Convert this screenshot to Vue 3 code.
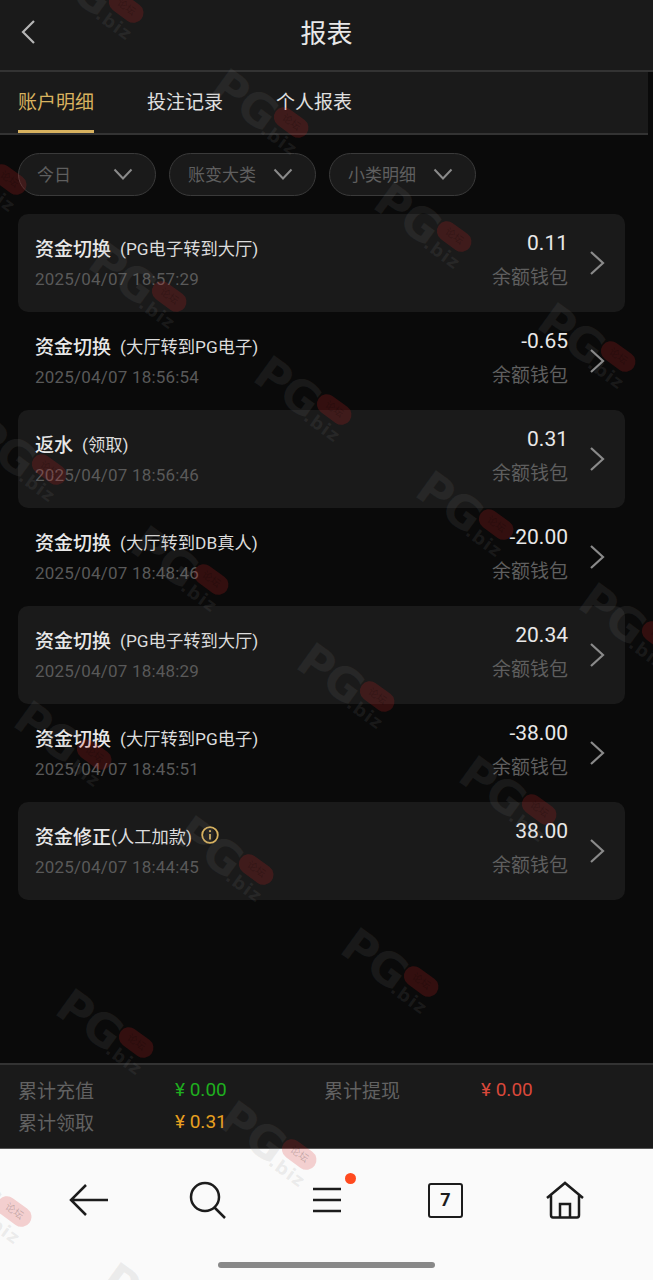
<script setup>
const tabs = ['账户明细', '投注记录', '个人报表']
const filters = ['今日', '账变大类', '小类明细']

const rows = [
  { title: '资金切换', note: '(PG电子转到大厅)', time: '2025/04/07 18:57:29', amount: '0.11' },
  { title: '资金切换', note: '(大厅转到PG电子)', time: '2025/04/07 18:56:54', amount: '-0.65' },
  { title: '返水', note: '(领取)', time: '2025/04/07 18:56:46', amount: '0.31' },
  { title: '资金切换', note: '(大厅转到DB真人)', time: '2025/04/07 18:48:46', amount: '-20.00' },
  { title: '资金切换', note: '(PG电子转到大厅)', time: '2025/04/07 18:48:29', amount: '20.34' },
  { title: '资金切换', note: '(大厅转到PG电子)', time: '2025/04/07 18:45:51', amount: '-38.00' },
  { title: '资金修正', note: '(人工加款)', time: '2025/04/07 18:44:45', amount: '38.00', info: true },
]

// centre of each watermark stamp
const marks = [
  [95, -4], [260, 111], [423, 225], [138, 285], [587, 345], [303, 398], [-22, 168],
  [18, 458], [465, 513], [180, 568], [628, 625], [346, 685], [63, 743], [508, 798],
  [225, 858], [390, 970], [105, 1031], [268, 1143], [-17, 1200], [150, 1305],
]
</script>

<template>
  <div class="page">
    <header class="top">
      <svg class="back" width="16" height="26" viewBox="0 0 16 26">
        <path d="M14 2 L3 13 L14 24" />
      </svg>
      <h1>报表</h1>
    </header>

    <nav class="tabs">
      <span v-for="(t, i) in tabs" :key="t" class="tab" :class="{ on: i === 0 }">{{ t }}</span>
    </nav>

    <main class="content">
      <div class="filters">
        <div v-for="f in filters" :key="f" class="pill">
          <span>{{ f }}</span>
          <svg width="20" height="12" viewBox="0 0 20 12"><path d="M1.5 1.5 L10 10.5 L18.5 1.5" /></svg>
        </div>
      </div>

      <ul class="list">
        <li v-for="(r, i) in rows" :key="i" class="row" :class="{ alt: i % 2 === 0 }">
          <div class="left">
            <div class="name">
              <b>{{ r.title }}</b><span class="note" :class="{ tight: r.info }">{{ r.note }}</span>
              <svg v-if="r.info" class="info" width="18" height="18" viewBox="0 0 18 18">
                <circle cx="9" cy="9" r="7.8" />
                <path d="M9 8 V13.5" />
                <circle class="dot" cx="9" cy="5.2" r="1.1" />
              </svg>
            </div>
            <div class="time">{{ r.time }}</div>
          </div>
          <div class="right">
            <div class="amount">{{ r.amount }}</div>
            <div class="wallet">余额钱包</div>
          </div>
          <svg class="more" width="16" height="26" viewBox="0 0 16 26"><path d="M2 2 L14 13 L2 24" /></svg>
        </li>
      </ul>
    </main>

    <section class="summary">
      <div class="cell"><span class="lab">累计充值</span><span class="val green">¥ 0.00</span></div>
      <div class="cell"><span class="lab">累计提现</span><span class="val red">¥ 0.00</span></div>
      <div class="cell"><span class="lab">累计领取</span><span class="val orange">¥ 0.31</span></div>
    </section>

    <footer class="browser">
      <div class="tools">
        <svg width="40" height="34" viewBox="0 0 40 34"><path d="M39 17 H3 M17 2 L2 17 L17 32" /></svg>
        <svg width="40" height="38" viewBox="0 0 40 38"><circle cx="17" cy="16" r="14" /><path d="M26 26 L37 37" /></svg>
        <div class="menu">
          <svg width="30" height="26" viewBox="0 0 30 26"><path d="M1 2 H29 M1 13 H29 M1 24 H29" /></svg>
          <i class="badge"></i>
        </div>
        <div class="count">7</div>
        <svg width="40" height="38" viewBox="0 0 40 38">
          <path d="M2 17 L20 2 L38 17 M6 14 V34 Q6 36.500 8 36.500 H32 Q34 36.500 34 34 V14 M15 36 V23 H25 V36" />
        </svg>
      </div>
      <div class="handle"></div>
    </footer>

    <div class="stamps">
      <div v-for="(m, i) in marks" :key="i" class="stamp" :style="{ left: m[0] + 'px', top: m[1] + 'px' }">
        <span class="pg">PG</span>
        <span class="blob">论坛</span>
        <span class="biz">.biz</span>
      </div>
    </div>
  </div>
</template>

<style scoped>
.page {
  position: relative;
  width: 653px;
  height: 1280px;
  overflow: hidden;
  display: flex;
  flex-direction: column;
  background: #0a0a0a;
  font-family: Roboto, "Noto Sans CJK SC", sans-serif;
  color: #e6e6e6;
}

.top {
  height: 72px;
  box-sizing: border-box;
  flex: none;
  position: relative;
  display: flex;
  align-items: center;
  justify-content: center;
  background: #1a1a1a;
  border-bottom: 2px solid #333;
}
.top h1 {
  margin: 0 0 7px;
  font-size: 26px;
  font-weight: 400;
  color: #e8e8e8;
}
.back {
  position: absolute;
  left: 20px;
  top: 19px;
}
.back path {
  fill: none;
  stroke: #b5b5b5;
  stroke-width: 2.2;
}

.tabs {
  height: 63px;
  box-sizing: border-box;
  flex: none;
  margin-right: 5px;
  padding-left: 18px;
  display: flex;
  gap: 53px;
  background: #1a1a1a;
  border-bottom: 2px solid #333;
}
.tab {
  font-size: 19px;
  line-height: 62px;
  color: #e0e0e0;
  height: 61px;
  box-sizing: border-box;
}
.tab.on {
  color: #d8b25f;
  border-bottom: 3px solid #d8b25f;
}

.content {
  flex: 1;
  padding: 18px 28px 0 18px;
}

.filters {
  display: flex;
  gap: 13px;
}
.pill {
  width: 147px;
  height: 43px;
  box-sizing: border-box;
  padding: 0 22px 2px 18px;
  display: flex;
  align-items: center;
  justify-content: space-between;
  background: #1a1a1a;
  border: 1px solid #3a3a3a;
  border-radius: 22px;
  font-size: 17px;
  color: #5f5f5f;
}
.pill:first-child {
  width: 138px;
}
.pill svg path {
  fill: none;
  stroke: #8a8a8a;
  stroke-width: 2;
}

.list {
  list-style: none;
  margin: 18px 0 0;
  padding: 0;
}
.row {
  height: 98px;
  box-sizing: border-box;
  padding: 0 20px 0 17px;
  display: flex;
  align-items: center;
  border-radius: 10px;
}
.row.alt {
  background: #1a1a1a;
}
.left {
  flex: 1;
  margin-top: -4px;
}
.name {
  display: flex;
  align-items: center;
  height: 28px;
  font-size: 19px;
  color: #e8e8e8;
}
.name b {
  font-weight: 500;
}
.note {
  margin-left: 9px;
  font-size: 17.300px;
  color: #dcdcdc;
}
.note.tight {
  margin-left: 0;
}
.info {
  margin-left: 9px;
}
.info circle,
.info path {
  fill: none;
  stroke: #d8b25f;
  stroke-width: 1.800;
}
.info .dot {
  fill: #d8b25f;
  stroke: none;
}
.time {
  margin-top: 8px;
  font-size: 17px;
  letter-spacing: 0.200px;
  color: #595959;
}
.right {
  text-align: right;
  margin-top: -5px;
}
.amount {
  font-size: 21px;
  line-height: 28px;
  color: #e8e8e8;
}
.wallet {
  margin-top: 7px;
  font-size: 19px;
  line-height: 28px;
  color: #5f5f5f;
}
.more {
  margin-left: 21px;
}
.more path {
  fill: none;
  stroke: #8a8a8a;
  stroke-width: 2.2;
}

.summary {
  height: 86px;
  flex: none;
  padding: 8px 0 0 18px;
  box-sizing: border-box;
  display: grid;
  grid-template-columns: 306px 1fr;
  grid-auto-rows: 32px;
  background: #1a1a1a;
  border-top: 2px solid #333;
  border-bottom: 1px solid #555;
  font-size: 19px;
}
.cell {
  display: flex;
  align-items: center;
}
.lab {
  width: 157px;
  color: #626262;
}
.val {
  font-size: 19px;
}
.green { color: #1fae1f; }
.red { color: #d9483a; }
.orange { color: #e8a020; }

.browser {
  height: 131px;
  flex: none;
  box-sizing: border-box;
  padding-top: 32px;
  background: #fafafa;
}
.tools {
  height: 38px;
  padding: 0 29px;
  display: grid;
  grid-template-columns: repeat(5, 119px);
  justify-items: center;
  align-items: center;
}
.tools svg path,
.tools svg circle {
  fill: none;
  stroke: #1c1c1c;
  stroke-width: 2.500;
}
.menu {
  position: relative;
  height: 26px;
}
.badge {
  position: absolute;
  left: 33px;
  top: -14px;
  width: 11px;
  height: 11px;
  border-radius: 50%;
  background: #ff4a1f;
}
.count {
  width: 35px;
  height: 35px;
  box-sizing: border-box;
  border: 2.500px solid #1c1c1c;
  border-radius: 3px;
  text-align: center;
  font-size: 18px;
  font-weight: 700;
  line-height: 30px;
  color: #1c1c1c;
}
.handle {
  width: 217px;
  height: 6px;
  margin: 43px auto 0;
  border-radius: 3px;
  background: #888;
}

.stamps {
  position: absolute;
  inset: 0;
  pointer-events: none;
}
.stamp {
  position: absolute;
  width: 100px;
  height: 54px;
  margin: -27px 0 0 -50px;
  transform: rotate(36deg);
}
.pg {
  position: absolute;
  left: -3px;
  top: 0;
  font-family: "DejaVu Sans", sans-serif;
  font-size: 46px;
  line-height: 54px;
  font-weight: 700;
  letter-spacing: -2px;
  color: rgba(130, 130, 130, 0.12);
}
.blob {
  position: absolute;
  left: 63px;
  top: 8px;
  width: 38px;
  height: 20px;
  border-radius: 10px;
  background: rgba(215, 35, 35, 0.2);
  font-size: 10px;
  line-height: 20px;
  text-align: center;
  color: rgba(0, 0, 0, 0.2);
}
.biz {
  position: absolute;
  left: 62px;
  top: 28px;
  font-family: "DejaVu Sans", sans-serif;
  font-size: 18px;
  line-height: 21px;
  font-weight: 700;
  letter-spacing: 1px;
  color: rgba(130, 130, 130, 0.13);
}
</style>
